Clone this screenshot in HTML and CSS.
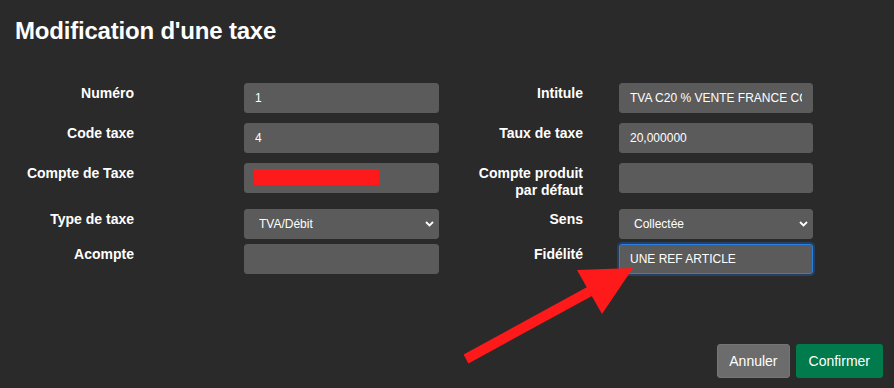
FILE: index.html
```html
<!DOCTYPE html>
<html lang="fr">
<head>
    <meta charset="UTF-8">
    <meta name="viewport" content="width=device-width, initial-scale=1.0">
    <title>Modification d'une taxe</title>
    <link rel="stylesheet" href="styles.css">
</head>
<body>
    <h1 class="title">Modification d'une taxe</h1>

    <form class="tax-form">
        <div class="form-row">
            <label class="lbl lbl-left">Numéro</label>
            <input class="field" type="text" value="1">
            <label class="lbl lbl-right">Intitule</label>
            <input class="field" type="text" value="TVA C20 % VENTE FRANCE COMPTANT">
        </div>

        <div class="form-row">
            <label class="lbl lbl-left">Code taxe</label>
            <input class="field" type="text" value="4">
            <label class="lbl lbl-right">Taux de taxe</label>
            <input class="field" type="text" value="20,000000">
        </div>

        <div class="form-row">
            <label class="lbl lbl-left">Compte de Taxe</label>
            <div class="field-wrap">
                <input class="field" type="text" value="">
                <!-- masked value -->
                <span class="redacted"></span>
            </div>
            <label class="lbl lbl-right">Compte produit<br>par défaut</label>
            <input class="field" type="text" value="">
        </div>

        <div class="form-row tight">
            <label class="lbl lbl-left">Type de taxe</label>
            <div class="select-wrap">
                <select class="field select">
                    <option>TVA/Débit</option>
                    <option>TVA/Encaissement</option>
                </select>
                <svg class="chevron" width="9" height="6" viewBox="0 0 9 6">
                    <path d="M1 1 L4.5 4.5 L8 1" fill="none" stroke="#fff" stroke-width="1.8"/>
                </svg>
            </div>
            <label class="lbl lbl-right">Sens</label>
            <div class="select-wrap">
                <select class="field select">
                    <option>Collectée</option>
                    <option>Déductible</option>
                </select>
                <svg class="chevron" width="9" height="6" viewBox="0 0 9 6">
                    <path d="M1 1 L4.5 4.5 L8 1" fill="none" stroke="#fff" stroke-width="1.8"/>
                </svg>
            </div>
        </div>

        <div class="form-row">
            <label class="lbl lbl-left">Acompte</label>
            <input class="field" type="text" value="">
            <label class="lbl lbl-right">Fidélité</label>
            <input class="field focused" type="text" value="UNE REF ARTICLE">
        </div>
    </form>

    <div class="actions">
        <button type="button" class="btn btn-cancel">Annuler</button>
        <button type="button" class="btn btn-ok">Confirmer</button>
    </div>

    <!-- annotation arrow -->
    <svg class="arrow" width="894" height="388" viewBox="0 0 894 388">
        <line x1="466" y1="359" x2="596" y2="288" stroke="#fe1a1a" stroke-width="10"/>
        <polygon points="633,268 577,270 602,314" fill="#fe1a1a"/>
    </svg>
</body>
</html>
```

FILE: styles.css
```css
body {
    margin: 0;
    position: relative;
    min-height: 388px;
    background: #2a2a2a;
    color: #fff;
    font-family: "Liberation Sans", Arial, sans-serif;
}

.title {
    margin: 0;
    padding: 17px 0 0 15px;
    font-size: 24px;
    line-height: 28px;
    font-weight: bold;
    letter-spacing: -0.2px;
}

.tax-form {
    margin-top: 38px;
}

.form-row {
    display: grid;
    grid-template-columns: 244px 195px 180px 194px;
    align-items: start;
    margin-bottom: 10px;
}

.form-row.tight {
    margin-bottom: 5px;
}

.lbl {
    text-align: right;
    font-size: 14px;
    font-weight: bold;
    line-height: 17px;
    padding-top: 2px;
}

.lbl-left {
    padding-right: 110px;
}

.lbl-right {
    padding-right: 36px;
}

.field {
    box-sizing: border-box;
    width: 100%;
    height: 30px;
    margin: 0;
    padding: 0 10px;
    border: 1px solid #5b5b5b;
    border-radius: 3px;
    background: #5b5b5b;
    color: #fff;
    font-family: "Liberation Sans", Arial, sans-serif;
    font-size: 12px;
    outline: none;
}

.field.focused {
    border-color: #2a7fe0;
    box-shadow: 0 0 0 2px rgba(28, 90, 170, 0.45);
}

.field-wrap,
.select-wrap {
    position: relative;
}

.redacted {
    position: absolute;
    left: 10px;
    top: 6px;
    width: 125px;
    height: 16px;
    background: #fe1a1a;
}

.select {
    appearance: none;
    -webkit-appearance: none;
    padding-left: 14px;
}

.chevron {
    position: absolute;
    right: 5px;
    top: 12px;
    pointer-events: none;
}

.actions {
    display: flex;
    justify-content: flex-end;
    gap: 6px;
    margin-top: 70px;
    padding-right: 11px;
}

.btn {
    height: 34px;
    padding: 0 11px;
    border: 1px solid transparent;
    border-radius: 3px;
    color: #fff;
    font-family: "Liberation Sans", Arial, sans-serif;
    font-size: 14px;
    cursor: pointer;
}

.btn-cancel {
    background: #6c6c6c;
    border-color: #757575;
}

.btn-ok {
    background: #017a4c;
    padding: 0 12px;
}

.arrow {
    position: absolute;
    left: 0;
    top: 0;
    pointer-events: none;
}
```
